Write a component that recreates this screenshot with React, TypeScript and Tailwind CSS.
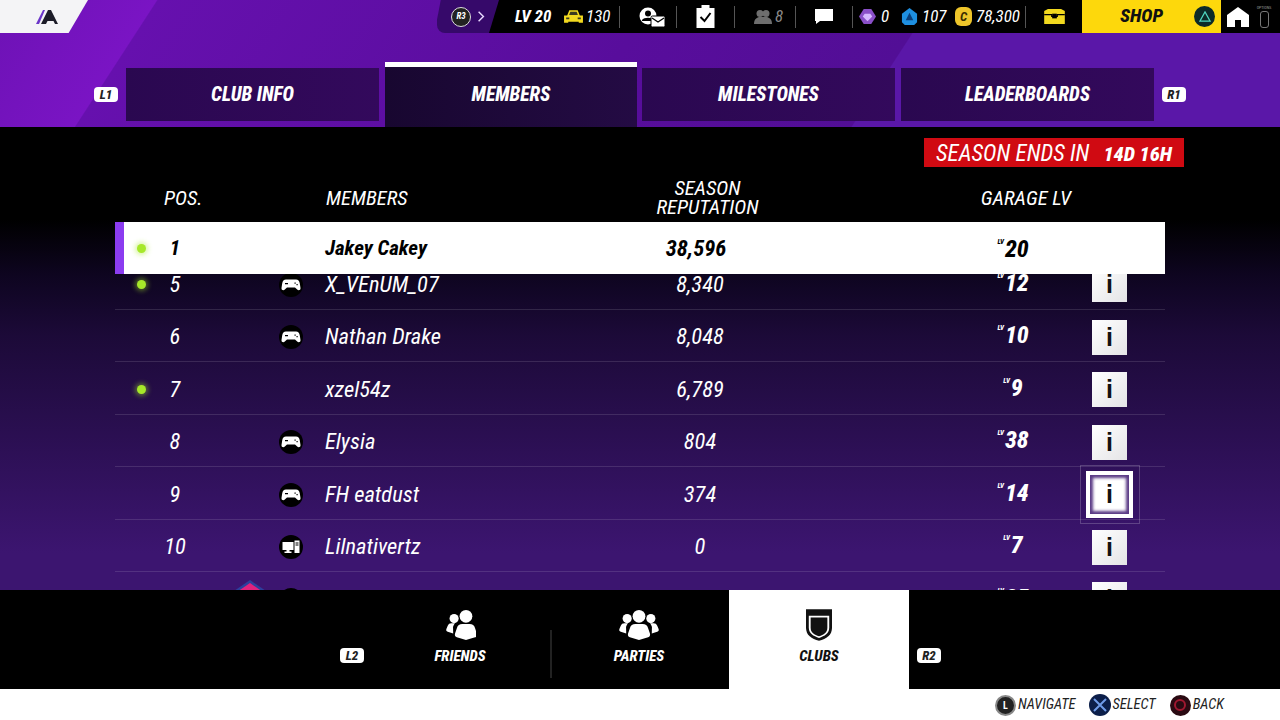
import React from 'react';

type Member = {
  pos: number | string;
  name: string;
  rep: string;
  lv: number;
  online?: boolean;
  platform?: 'pad' | 'pc';
  emblem?: boolean;
};

const members: Member[] = [
  { pos: 5, name: 'X_VEnUM_07', rep: '8,340', lv: 12, online: true, platform: 'pad' },
  { pos: 6, name: 'Nathan Drake', rep: '8,048', lv: 10, platform: 'pad' },
  { pos: 7, name: 'xzel54z', rep: '6,789', lv: 9, online: true },
  { pos: 8, name: 'Elysia', rep: '804', lv: 38, platform: 'pad' },
  { pos: 9, name: 'FH eatdust', rep: '374', lv: 14, platform: 'pad' },
  { pos: 10, name: 'Lilnativertz', rep: '0', lv: 7, platform: 'pc' },
  { pos: '', name: '', rep: '', lv: 25, platform: 'pad', emblem: true },
];

const Divider = () => <div className="w-px h-[22px] bg-[#555]" />;

const Badge = ({ label }: { label: string }) => (
  <div className="w-[24px] h-[15px] bg-white rounded-[4px] flex items-center justify-center text-[13px] font-extrabold italic text-[#222] leading-none">
    {label}
  </div>
);

const PadIcon = ({ className }: { className?: string }) => (
  <svg viewBox="0 0 24 24" className={className}>
    <circle cx="12" cy="12" r="12" fill="#000" />
    <path d="M7 6.500h10c2.200 0 3.400 1.500 3.800 4l.7 4.500c.3 2-2 3-3.300 1.600L16 14.500H8l-2.200 2.100C4.500 18 2.200 17 2.500 15l.7-4.500C3.600 8 4.800 6.500 7 6.500z" fill="#fff" />
    <path d="M6 10h3v1.200H6zM15.500 9.500h1.200v1.200h-1.200zM17.500 11h1.200v1.200h-1.200z" fill="#000" />
  </svg>
);

const PcIcon = ({ className }: { className?: string }) => (
  <svg viewBox="0 0 24 24" className={className}>
    <circle cx="12" cy="12" r="12" fill="#000" />
    <path d="M3.500 7h11v8h-4v1.500h2V18h-7v-1.500h2V15h-4z" fill="#fff" />
    <path d="M15.500 5.500h5V18h-5z" fill="#fff" />
    <path d="M16.500 7.500h3v1h-3zM16.500 9.500h3v1h-3z" fill="#000" />
  </svg>
);

const UserGroup = ({ three }: { three?: boolean }) => (
  <svg viewBox={three ? '0 0 46 34' : '0 0 34 34'} className={three ? 'w-[42px] h-[31px]' : 'w-[31px] h-[31px]'} fill="#fff">
    <circle cx="23" cy="8" r="7" />
    <path d="M23 34l-10-3c-2-.5-2.500-2-2-4l2-6c.8-3 3-4.500 6-4.500h8c3 0 5.200 1.500 6 4.500l2 6c.5 2 0 3.500-2 4z" />
    <circle cx="10" cy="10.500" r="5" />
    <path d="M9 27l-6-2c-1.500-.5-2-1.500-1.500-3l1.500-3.500c.8-2 2-2.800 4-2.800h4c-1 1-1.800 2.500-2.200 4z" />
    {three && <circle cx="36" cy="10.500" r="5" />}
    {three && <path d="M37 27l6-2c1.500-.5 2-1.500 1.500-3L43 18.500c-.8-2-2-2.800-4-2.800h-4c1 1 1.800 2.500 2.200 4z" />}
  </svg>
);

const InfoButton = () => (
  <div className="w-[35px] h-[35px] bg-[linear-gradient(135deg,#fff,#e4e4e6)] flex items-center justify-center text-[#111] text-[25px] not-italic font-bold font-['Liberation_Sans',sans-serif] leading-none">
    i
  </div>
);

const FocusedButton = () => (
  <div className="w-[60px] h-[59px] -mx-[12.500px] -my-[12px] border border-[#ffffff33] flex items-center justify-center">
    <div className="w-[47px] h-[47px] border-[4px] border-white bg-white shadow-[inset_0_0_3px_3px_#5a3a85] flex items-center justify-center text-[#111] text-[25px] not-italic font-bold font-['Liberation_Sans',sans-serif] leading-none">
      i
    </div>
  </div>
);

const LevelValue = ({ lv, dark }: { lv: number; dark?: boolean }) => (
  <div className={`w-[126px] flex justify-center items-start italic font-extrabold text-[24px] leading-none ${dark ? 'text-black' : 'text-white -mt-[4px]'}`}>
    <span className="text-[7px] mr-[1px] mt-[2px]">LV</span>
    <span>{lv}</span>
  </div>
);

const Dot = () => (
  <div className="w-[9px] h-[9px] rounded-full bg-[#a6e82a] shadow-[0_0_5px_2px_rgba(166,232,42,0.45)]" />
);

const MemberRow = ({ m }: { m: Member }) => (
  <div className="h-[52.500px] pt-[4px] flex items-center border-b border-[#ffffff1f] text-white text-[22.500px] italic">
    <div className="w-[35px] pl-[22px]">{m.online && <Dot />}</div>
    <div className="w-[50px] text-center">{m.pos}</div>
    <div className="w-[66px] relative">
      {m.emblem && (
        <svg viewBox="0 0 32 40" className="w-[32px] h-[40px] ml-[34px]">
          <path d="M16 0l16 11v29H0V11z" fill="#2c3f9c" />
          <path d="M16 3l13 9v28H3V12z" fill="#e0227d" />
        </svg>
      )}
    </div>
    <div className="w-[50px] flex justify-center">
      {m.platform === 'pad' && <PadIcon className="w-[24px] h-[24px]" />}
      {m.platform === 'pc' && <PcIcon className="w-[24px] h-[24px]" />}
    </div>
    <div className="w-[9px]" />
    <div className="w-[275px]">{m.name}</div>
    <div className="w-[200px] text-center">{m.rep}</div>
    <div className="w-[150px]" />
    <LevelValue lv={m.lv} />
    <div className="w-[16px]" />
    {m.pos === 9 ? <FocusedButton /> : <InfoButton />}
  </div>
);

const TopBar = () => (
  <div className="h-[33px] flex">
    <div className="w-[88px] h-[33px] bg-[#f4f4f6] [clip-path:polygon(0_0,100%_0,78%_100%,0_100%)] flex items-center pl-[36px]">
      <svg viewBox="0 0 24 14" className="w-[24px] h-[14px]">
        <path d="M0 14L7 0h2L3 14z" fill="#6a35c8" />
        <path d="M12 0h3l7 14h-3l-1.500-3h-6L10 14H5z" fill="#1c1c28" />
      </svg>
    </div>
    <div className="w-[349px]" />
    <div className="w-[63px] h-[33px] bg-[#36096a] rounded-bl-[8px] [clip-path:polygon(6%_0,100%_0,100%_100%,0_100%,0_60%)] flex items-center pl-[14px]">
      <div className="w-[20px] h-[20px] rounded-full bg-[#222] border border-[#ddd] text-white text-[9px] font-bold italic flex items-center justify-center">R3</div>
      <svg viewBox="0 0 10 14" className="w-[8px] h-[13px] ml-[6px]" fill="none" stroke="#e9d9ff" strokeWidth="1.800">
        <path d="M2 1l6 6-6 6" />
      </svg>
    </div>
    <div className="flex-1 h-[33px] bg-black -ml-[11px] flex items-center text-white text-[17px] italic [clip-path:polygon(10px_0,100%_0,100%_100%,0_100%)]">
      <span className="ml-[26px] font-bold w-[48px]">LV 20</span>
      <svg viewBox="0 0 20 14" className="w-[21px] h-[15px] mr-[2px]">
        <path d="M1 6l3 0 2-5h8l2 5 3 0v7h-4v-1H5v1H1z" fill="#f2d91f" />
        <path d="M7 2.500h6l1.200 3H5.800zM3 8h3v1.500H3zM14 8h3v1.500h-3z" fill="#3a3a20" />
      </svg>
      <span className="w-[33px]">130</span>
      <Divider />
      <svg viewBox="0 0 26 20" className="w-[26px] h-[20px] ml-[19px] mr-[11px]" fill="#fff">
        <circle cx="9" cy="9" r="8.500" />
        <circle cx="9" cy="6.500" r="3" fill="#000" />
        <path d="M3 13c2-3 10-3 12 0v1H3z" fill="#000" />
        <rect x="12" y="9" width="14" height="11" rx="1.500" stroke="#000" />
        <path d="M13 11l6 4 6-4" fill="none" stroke="#000" strokeWidth="1.300" />
      </svg>
      <Divider />
      <svg viewBox="0 0 18 23" className="w-[19px] h-[23px] ml-[19px] mr-[19px]">
        <path d="M0 3h5V0h8v3h5v20H0z" fill="#fff" />
        <path d="M4 12l4 4 6-8" fill="none" stroke="#000" strokeWidth="2" />
      </svg>
      <Divider />
      <svg viewBox="0 0 18 14" className="w-[18px] h-[14px] ml-[19px] mr-[3px]" fill="#6e6e6e">
        <circle cx="6" cy="3.500" r="3.500" />
        <circle cx="12" cy="3.500" r="3.500" />
        <path d="M0 14c0-5 3-7 6-7s3 0 6 0 6 2 6 7z" />
      </svg>
      <span className="w-[20px] text-[#8a8a8a]">8</span>
      <Divider />
      <svg viewBox="0 0 18 15" className="w-[18px] h-[15px] ml-[19px] mr-[19px]" fill="#fff">
        <path d="M0 0h18v12H5l-4 3v-3H0z" />
      </svg>
      <Divider />
      <svg viewBox="0 0 18 18" className="w-[17px] h-[17px] ml-[6px] mr-[5px]">
        <path d="M5 1h8l5 8-5 8H5L0 9z" fill="#8a4fc8" />
        <path d="M6 6h6l2 3-5 5-5-5z" fill="#d6b8ff" />
      </svg>
      <span className="w-[20px]">0</span>
      <svg viewBox="0 0 18 18" className="w-[17px] h-[17px] mr-[4px]">
        <path d="M9 0l8 6v9l-3 3H4l-3-3V6z" fill="#1e8fe0" />
        <path d="M9 5l4 8H5z" fill="#0a3d78" />
      </svg>
      <span className="w-[33px]">107</span>
      <div className="w-[17px] h-[19px] rounded-[6px] bg-[#eec52a] text-[#3a2c00] text-[13px] font-bold flex items-center justify-center mr-[4px]">C</div>
      <span className="w-[49px]">78,300</span>
      <Divider />
      <svg viewBox="0 0 22 16" className="w-[21px] h-[15px] ml-[18px] mr-[17px]">
        <path d="M0 2l4-2h14l4 2v14H0z" fill="#f2d91f" />
        <path d="M0 6h8v2h6V6h8" fill="none" stroke="#000" strokeWidth="1.200" />
        <rect x="8.500" y="5" width="5" height="5" fill="#000" />
      </svg>
      <div className="w-[139px] h-[33px] bg-[#fdd80c] text-[#111] font-extrabold text-[19px] flex items-center pl-[38px] relative">
        <span className="w-[74px]">SHOP</span>
        <div className="w-[21px] h-[21px] rounded-full bg-[#0d2a28] flex items-center justify-center">
          <svg viewBox="0 0 14 13" className="w-[12px] h-[11px]" fill="none" stroke="#4fd6c0" strokeWidth="1.400">
            <path d="M7 1l6 11H1z" />
          </svg>
        </div>
      </div>
      <svg viewBox="0 0 22 20" className="w-[22px] h-[20px] ml-[6px]" fill="#fff">
        <path d="M11 0l11 8v12h-8v-7H8v7H0V8z" />
      </svg>
      <div className="ml-[7px] flex flex-col items-center w-[16px]">
        <span className="text-[4px] text-[#999] not-italic leading-none mb-[1px]">OPTIONS</span>
        <div className="w-[9px] h-[17px] rounded-[3px] border border-[#777]" />
      </div>
    </div>
  </div>
);

const Tab = ({ label, active }: { label: string; active?: boolean }) =>
  active ? (
    <div className="w-[252px] h-[65px] bg-[linear-gradient(90deg,#180730,#240b44)] border-t-[5px] border-white flex items-center justify-center text-white font-extrabold italic text-[19.500px] pb-[5px]">
      {label}
    </div>
  ) : (
    <div className="w-[253px] h-[53px] mt-[6px] bg-[linear-gradient(90deg,#2a0850,#33095c)] flex items-center justify-center text-white font-extrabold italic text-[19.500px]">
      {label}
    </div>
  );

const BottomTab = ({ label, active, children }: { label: string; active?: boolean; children: React.ReactNode }) => (
  <div className={`w-[180px] h-[99px] flex flex-col items-center pt-[18px] ${active ? 'bg-white text-[#111]' : 'text-white'}`}>
    <div className="h-[33px] flex items-center">{children}</div>
    <div className="mt-[4px] font-extrabold italic text-[15px] leading-[22px]">{label}</div>
  </div>
);

const Hint = ({ label, ml, children }: { label: string; ml: string; children: React.ReactNode }) => (
  <div className={`flex items-center ${ml}`}>
    {children}
    <span className="ml-[2px] text-[#222] italic text-[14.500px]">{label}</span>
  </div>
);

export default function App() {
  return (
    <div className="w-[1280px] h-[720px] overflow-hidden bg-white font-['Roboto',sans-serif] [font-stretch:75%]">
      <div className="h-[127px] bg-[linear-gradient(123deg,#6d12b5_0%,#7a14c4_11.500%,#6610ae_11.600%,#580d9c_48%,#520e96_68.500%,#5a17a8_68.600%,#5a17a8_100%)]">
        <TopBar />
        <div className="mt-[29px] flex pl-[94px]">
          <div className="mt-[25px] mr-[8px]"><Badge label="L1" /></div>
          <Tab label="CLUB INFO" />
          <div className="w-[6px]" />
          <Tab label="MEMBERS" active />
          <div className="w-[5px]" />
          <Tab label="MILESTONES" />
          <div className="w-[6px]" />
          <Tab label="LEADERBOARDS" />
          <div className="mt-[25px] ml-[8px]"><Badge label="R1" /></div>
        </div>
      </div>

      <div className="h-[463px] bg-[linear-gradient(180deg,#000_0%,#000_20%,#0e0520_32%,#1c0a38_45%,#3c1570_92%)] flex flex-col">
        <div className="h-[40px] pt-[11px] flex justify-end pr-[96px]">
          <div className="w-[260px] h-[29px] pt-[3px] bg-[#d00a12] flex items-center justify-center text-white italic text-[23px] whitespace-nowrap">
            SEASON ENDS IN
            <span className="ml-[14px] font-extrabold text-[20.500px]">14D 16H</span>
          </div>
        </div>
        <div className="h-[55px] pt-[7px] ml-[115px] w-[1050px] flex items-center text-white italic text-[20.500px] leading-[19px]">
          <div className="w-[49px]" />
          <div className="w-[36px] text-center">POS.</div>
          <div className="w-[126px]" />
          <div className="w-[300px]">MEMBERS</div>
          <div className="w-[163px] text-center">SEASON<br />REPUTATION</div>
          <div className="w-[137px]" />
          <div className="w-[200px] text-center">GARAGE LV</div>
        </div>
        <div className="ml-[115px] w-[1050px] h-[52px] pt-[2px] bg-white flex items-center text-black italic font-bold text-[21px] border-l-[9px] border-[#8b3cf0]">
          <div className="w-[26px] pl-[13px] -mt-[2px]"><Dot /></div>
          <div className="w-[50px] text-center">1</div>
          <div className="w-[125px]" />
          <div className="w-[275px]">Jakey Cakey</div>
          <div className="w-[192px] text-center text-[22.500px]">38,596</div>
          <div className="w-[158px]" />
          <LevelValue lv={20} dark />
        </div>
        <div className="ml-[115px] w-[1050px] flex-1 overflow-hidden">
          <div className="-mt-[17px]">
            {members.map((m, i) => (
              <MemberRow key={i} m={m} />
            ))}
          </div>
        </div>
      </div>

      <div className="h-[99px] bg-black flex">
        <div className="w-[340px]" />
        <div className="mt-[58px]"><Badge label="L2" /></div>
        <div className="w-[6px]" />
        <BottomTab label="FRIENDS"><UserGroup /></BottomTab>
        <div className="w-0 h-[48px] mt-[40px] border-l-2 border-[#222] -mr-[3px]" />
        <BottomTab label="PARTIES"><UserGroup three /></BottomTab>
        <BottomTab label="CLUBS" active>
          <svg viewBox="0 0 28 34" className="w-[26px] h-[32px]" fill="#111">
            <path d="M0 0h28v20c0 8-6 12-14 14C6 32 0 28 0 20z" />
            <path d="M3 7h22v13c0 6-5 9-11 11C8 29 3 26 3 20z" fill="#fff" />
            <path d="M5 9h18v11c0 5-4 8-9 9-5-1-9-4-9-9z" fill="#111" />
          </svg>
        </BottomTab>
        <div className="mt-[58px] ml-[8px]"><Badge label="R2" /></div>
      </div>

      <div className="h-[31px] pt-[1px] flex items-center pl-[995px]">
        <Hint label="NAVIGATE" ml="">
          <div className="w-[21px] h-[21px] rounded-full bg-[#222] border-2 border-[#888] text-white text-[10px] font-bold flex items-center justify-center">L</div>
        </Hint>
        <Hint label="SELECT" ml="ml-[13px]">
          <div className="w-[22px] h-[22px] rounded-full bg-[#0c1f4a] flex items-center justify-center">
            <svg viewBox="0 0 14 14" className="w-[14px] h-[14px]" stroke="#6f9be8" strokeWidth="2">
              <path d="M1 1l12 12M13 1L1 13" />
            </svg>
          </div>
        </Hint>
        <Hint label="BACK" ml="ml-[14px]">
          <div className="w-[21px] h-[21px] rounded-full bg-[#2a0a12] flex items-center justify-center">
            <div className="w-[12px] h-[12px] rounded-full border-2 border-[#a01830]" />
          </div>
        </Hint>
      </div>
    </div>
  );
}
